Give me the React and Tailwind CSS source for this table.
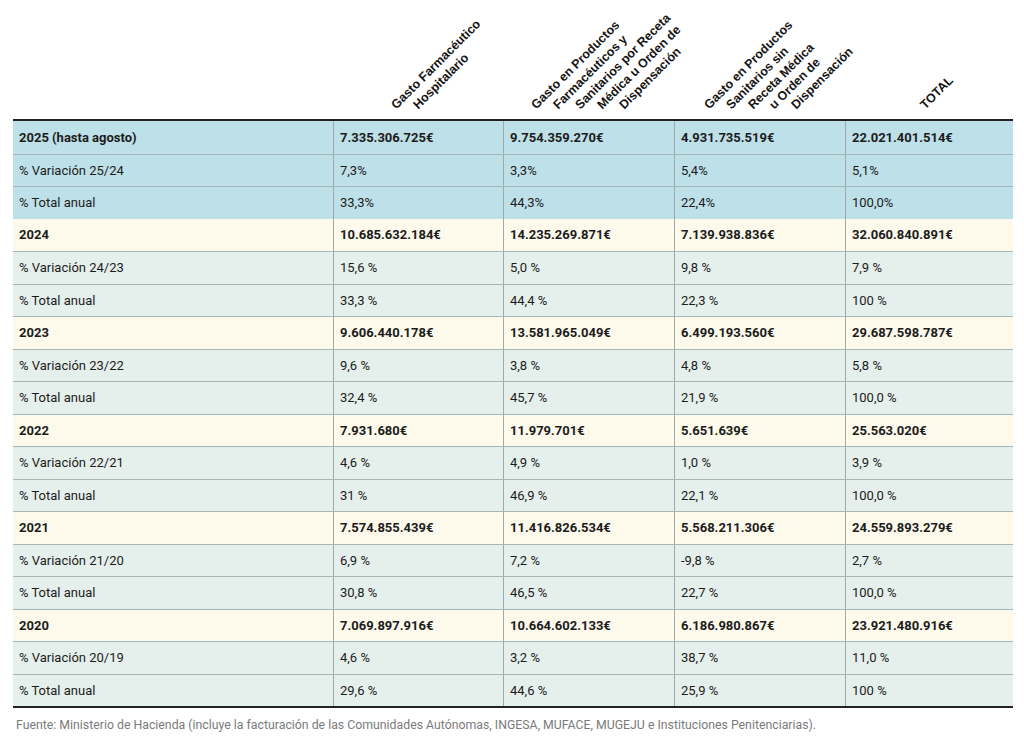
import React from 'react'

const headers = [
  [],
  [
    { text: 'Gasto Farmacéutico', cls: 'left-[65px]' },
    { text: 'Hospitalario', cls: 'left-[87px]' },
  ],
  [
    { text: 'Gasto en Productos', cls: 'left-[35px]' },
    { text: 'Farmacéuticos y', cls: 'left-[57px]' },
    { text: 'Sanitarios por Receta', cls: 'left-[79px]' },
    { text: 'Médica u Orden de', cls: 'left-[101px]' },
    { text: 'Dispensación', cls: 'left-[123px]' },
  ],
  [
    { text: 'Gasto en Productos', cls: 'left-[37px]' },
    { text: 'Sanitarios sin', cls: 'left-[59px]' },
    { text: 'Receta Médica', cls: 'left-[81px]' },
    { text: 'u Orden de', cls: 'left-[102px]' },
    { text: 'Dispensación', cls: 'left-[124px]' },
  ],
  [{ text: 'TOTAL', cls: 'left-[82px]' }],
]

// tone: blue | year | sub
const rows = [
  { tone: 'blue', bold: true, cells: ['2025 (hasta agosto)', '7.335.306.725€', '9.754.359.270€', '4.931.735.519€', '22.021.401.514€'] },
  { tone: 'blue', cells: ['% Variación 25/24', '7,3%', '3,3%', '5,4%', '5,1%'] },
  { tone: 'blue', cells: ['% Total anual', '33,3%', '44,3%', '22,4%', '100,0%'] },
  { tone: 'year', bold: true, noTop: true, cells: ['2024', '10.685.632.184€', '14.235.269.871€', '7.139.938.836€', '32.060.840.891€'] },
  { tone: 'sub', cells: ['% Variación 24/23', '15,6 %', '5,0 %', '9,8 %', '7,9 %'] },
  { tone: 'sub', cells: ['% Total anual', '33,3 %', '44,4 %', '22,3 %', '100 %'] },
  { tone: 'year', bold: true, cells: ['2023', '9.606.440.178€', '13.581.965.049€', '6.499.193.560€', '29.687.598.787€'] },
  { tone: 'sub', cells: ['% Variación 23/22', '9,6 %', '3,8 %', '4,8 %', '5,8 %'] },
  { tone: 'sub', cells: ['% Total anual', '32,4 %', '45,7 %', '21,9 %', '100,0 %'] },
  { tone: 'year', bold: true, cells: ['2022', '7.931.680€', '11.979.701€', '5.651.639€', '25.563.020€'] },
  { tone: 'sub', cells: ['% Variación 22/21', '4,6 %', '4,9 %', '1,0 %', '3,9 %'] },
  { tone: 'sub', cells: ['% Total anual', '31 %', '46,9 %', '22,1 %', '100,0 %'] },
  { tone: 'year', bold: true, cells: ['2021', '7.574.855.439€', '11.416.826.534€', '5.568.211.306€', '24.559.893.279€'] },
  { tone: 'sub', cells: ['% Variación 21/20', '6,9 %', '7,2 %', '-9,8 %', '2,7 %'] },
  { tone: 'sub', cells: ['% Total anual', '30,8 %', '46,5 %', '22,7 %', '100,0 %'] },
  { tone: 'year', bold: true, cells: ['2020', '7.069.897.916€', '10.664.602.133€', '6.186.980.867€', '23.921.480.916€'] },
  { tone: 'sub', cells: ['% Variación 20/19', '4,6 %', '3,2 %', '38,7 %', '11,0 %'] },
  { tone: 'sub', cells: ['% Total anual', '29,6 %', '44,6 %', '25,9 %', '100 %'] },
]

const toneBg = {
  blue: 'bg-[#bee0e8]',
  year: 'bg-[#fdfaec]',
  sub: 'bg-[#e5efeb]',
}

const cols = 'grid grid-cols-[320px_170px_171px_171px_168px]'

export default function App() {
  return (
    <div className="bg-white w-[1024px] h-[749px] pl-[13px] font-[family-name:Roboto,sans-serif] text-[#1c1c1c]">
      {/* rotated column headings */}
      <div className={`${cols} w-[1000px] h-[119px]`}>
        {headers.map((lines, i) => (
          <div key={i} className="relative h-full">
            {lines.map((l, j) => (
              <span
                key={j}
                className={`absolute bottom-[8px] ${l.cls} origin-bottom-left -rotate-45 whitespace-nowrap text-[12.5px] leading-none font-bold font-[family-name:Liberation_Sans,Arial,sans-serif] text-[#151515]`}
              >
                {l.text}
              </span>
            ))}
          </div>
        ))}
      </div>

      {/* table */}
      <div className="w-[1000px] border-t-2 border-b-2 border-[#222]">
        {rows.map((r, i) => (
          <div
            key={i}
            className={`${cols} h-[32.5px] ${toneBg[r.tone]} ${i > 0 && !r.noTop ? 'border-t border-[#a3b5b6]' : ''}`}
          >
            {r.cells.map((c, j) => (
              <div
                key={j}
                className={`flex items-center px-[6px] text-[13px] ${r.bold ? 'font-bold' : ''} ${j > 0 ? 'border-l border-[#9ea9aa]' : ''}`}
              >
                {c}
              </div>
            ))}
          </div>
        ))}
      </div>

      <p className="mt-[9px] pl-[3px] text-[12.3px] leading-4 text-[#7a7a7a]">
        Fuente: Ministerio de Hacienda (incluye la facturación de las Comunidades Autónomas, INGESA, MUFACE, MUGEJU e Instituciones Penitenciarias).
      </p>
    </div>
  )
}
